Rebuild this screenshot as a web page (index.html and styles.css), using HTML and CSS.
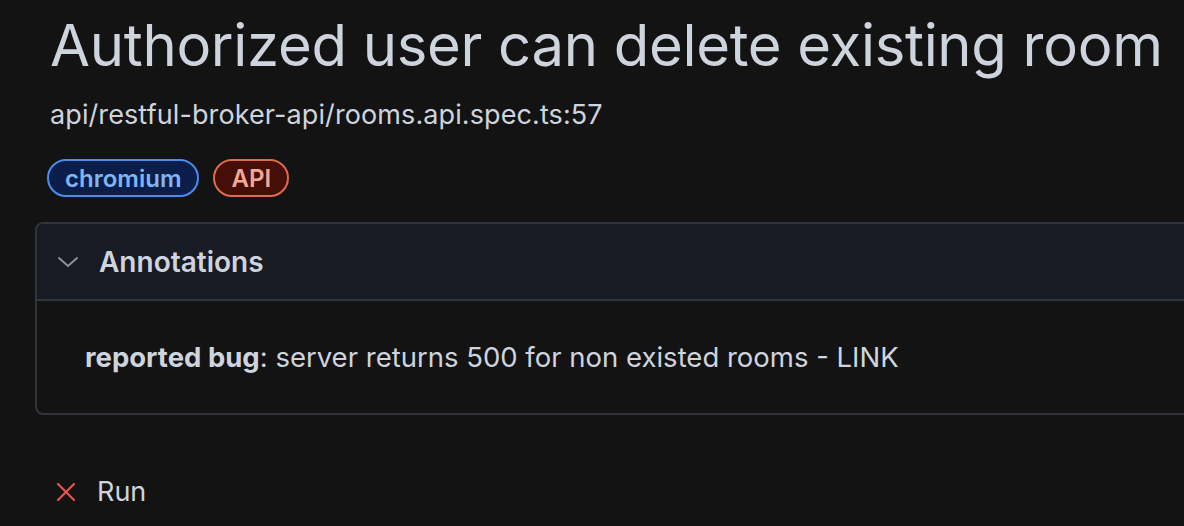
FILE: index.html
```html
<!DOCTYPE html>
<html>
<head>
<meta charset="utf-8">
<link rel="stylesheet" href="styles.css">
</head>
<body>
<div class="page">
  <h1 class="title">Authorized user can delete existing room</h1>
  <div class="location">api/restful-broker-api/rooms.api.spec.ts:57</div>
  <div class="labels">
    <span class="chip chip-blue">chromium</span>
    <span class="chip chip-red">API</span>
  </div>
  <div class="panel">
    <div class="panel-header">
      <svg class="chevron" width="22" height="12" viewBox="0 0 22 12"><path d="M2 2 L11 10 L20 2" fill="none" stroke="#8b8f98" stroke-width="2" stroke-linecap="round" stroke-linejoin="round"/></svg>
      <span class="panel-title">Annotations</span>
    </div>
    <div class="panel-body">
      <div class="annotation"><b>reported bug</b>: server returns 500 for non existed rooms - LINK</div>
    </div>
  </div>
  <div class="run">
    <svg class="xicon" width="20" height="20" viewBox="0 0 20 20"><path d="M2 2 L18 18 M18 2 L2 18" fill="none" stroke="#e5534b" stroke-width="2.2" stroke-linecap="round"/></svg>
    <span class="run-label">Run</span>
  </div>
</div>
</body>
</html>
```
FILE: styles.css
```css
html, body {
  margin: 0;
  padding: 0;
  background: #131313;
}
body {
  font-family: Inter, "Noto Sans", sans-serif;
  color: #c9d1d9;
  overflow: hidden;
  width: 1184px;
  height: 526px;
}
.page {
  padding-left: 35px;
}
.title {
  margin: 0;
  padding: 10px 0 0 15px;
  font-size: 58px;
  font-weight: 400;
  line-height: 70px;
  white-space: nowrap;
  color: #ced4de;
  letter-spacing: -0.3px;
}
.location {
  padding: 20px 0 0 15px;
  font-size: 27px;
  line-height: 30px;
  color: #ced4de;
  letter-spacing: 0.1px;
}
.labels {
  display: flex;
  gap: 14px;
  padding: 29px 0 0 12px;
}
.chip {
  display: inline-flex;
  align-items: center;
  height: 34px;
  padding: 0 16px;
  border-radius: 20px;
  font-size: 24px;
  font-weight: 600;
  border: 2px solid;
}
.chip-blue {
  background: #0b1e4a;
  border-color: #4a8bf0;
  color: #80b4f5;
}
.chip-red {
  background: #450f08;
  border-color: #e06a4c;
  color: #f2a894;
}
.panel {
  margin-top: 25px;
  margin-right: -20px;
  border: 2px solid #30343b;
  border-radius: 8px;
}
.panel-header {
  display: flex;
  align-items: center;
  height: 75px;
  background: #181b23;
  border-bottom: 2px solid #30343b;
  border-radius: 6px 6px 0 0;
  padding-left: 20px;
}
.chevron {
  width: 22px;
  height: 12px;
}
.panel-title {
  margin-left: 20px;
  font-size: 28px;
  font-weight: 600;
  color: #ced4de;
}
.panel-body {
  height: 112px;
  padding-left: 48px;
  display: flex;
  align-items: center;
}
.annotation {
  font-size: 27.5px;
  color: #ced4de;
}
.annotation b {
  font-weight: 700;
}
.run {
  display: flex;
  align-items: center;
  padding: 60px 0 0 21px;
}
.xicon {
  width: 20px;
  height: 20px;
}
.run-label {
  margin-left: 21px;
  font-size: 27px;
  color: #ced4de;
}
```
